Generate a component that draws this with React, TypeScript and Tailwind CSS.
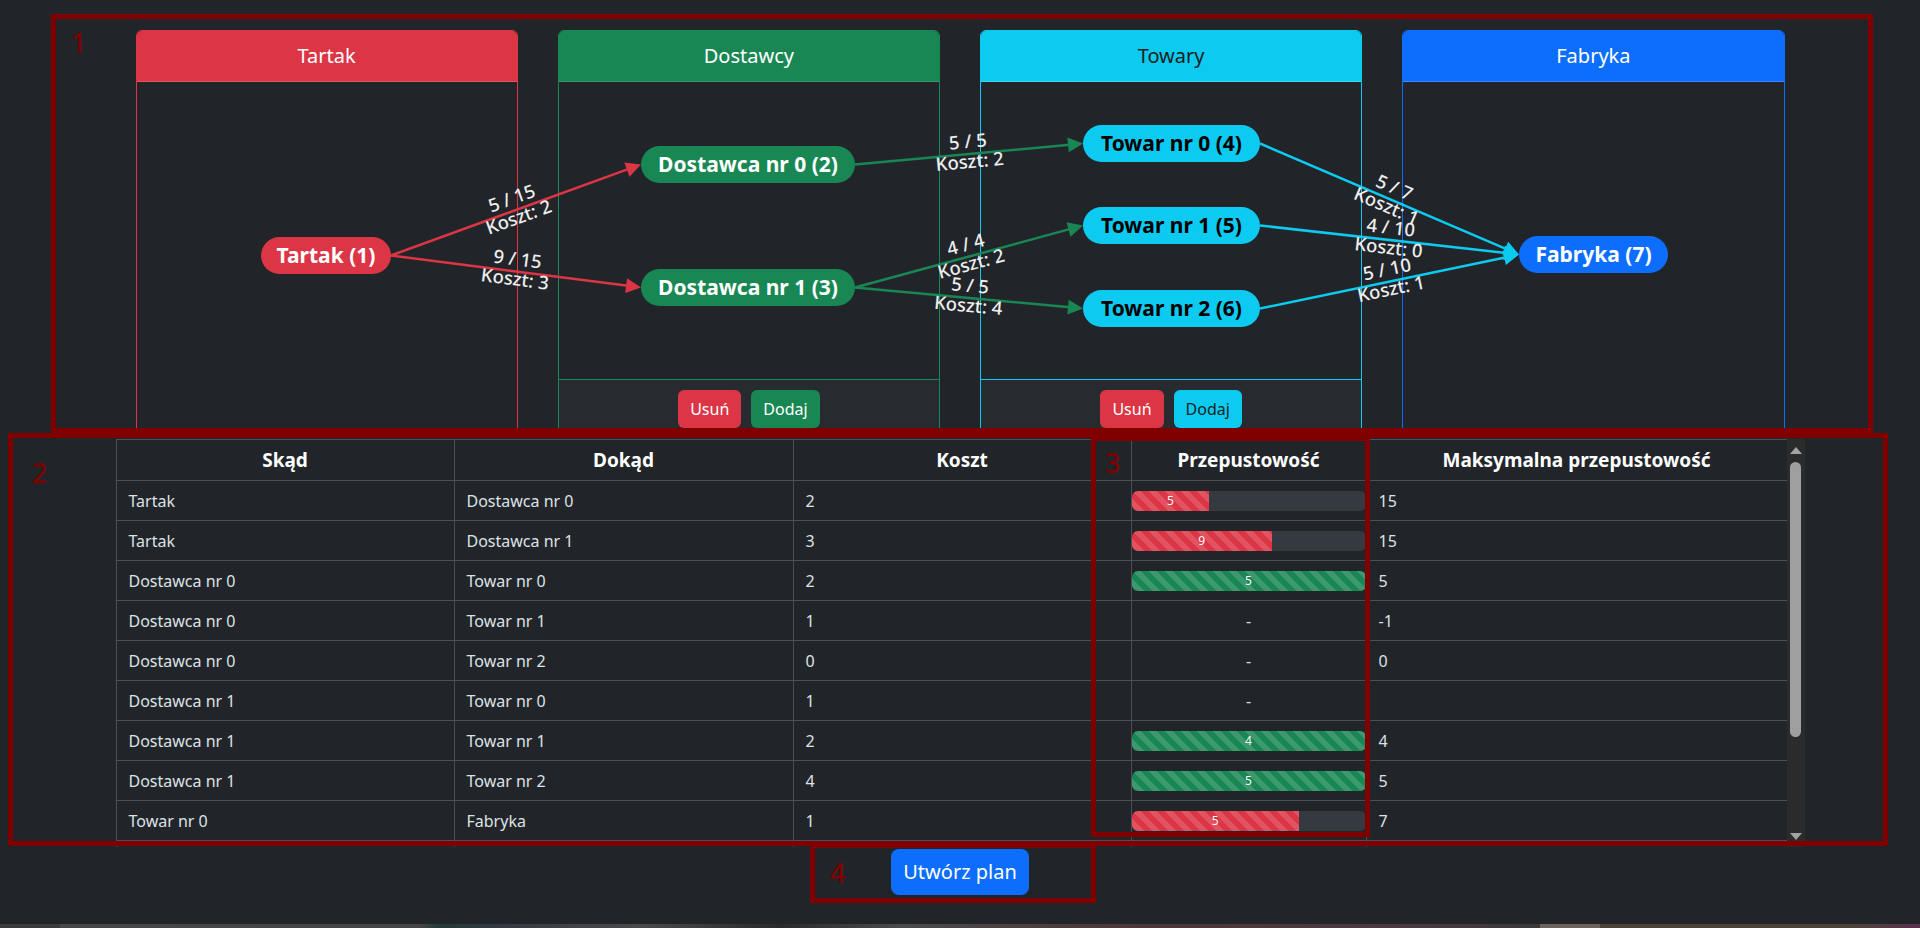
import React from "react";

const RED = "#dc3545";
const GREEN = "#198754";
const CYAN = "#0dcaf0";

type Edge = {
  x1: number;
  y1: number;
  x2: number;
  y2: number;
  color: string;
  flow: string;
  cost: number;
};

const edges: Edge[] = [
  { x1: 391, y1: 255.5, x2: 641, y2: 164.5, color: RED, flow: "5 / 15", cost: 2 },
  { x1: 391, y1: 255.5, x2: 641, y2: 287.5, color: RED, flow: "9 / 15", cost: 3 },
  { x1: 855, y1: 164.5, x2: 1083, y2: 143.5, color: GREEN, flow: "5 / 5", cost: 2 },
  { x1: 855, y1: 287.5, x2: 1083, y2: 225.5, color: GREEN, flow: "4 / 4", cost: 2 },
  { x1: 855, y1: 287.5, x2: 1083, y2: 308.5, color: GREEN, flow: "5 / 5", cost: 4 },
  { x1: 1260, y1: 143.5, x2: 1519, y2: 254.5, color: CYAN, flow: "5 / 7", cost: 1 },
  { x1: 1260, y1: 225.5, x2: 1519, y2: 254.5, color: CYAN, flow: "4 / 10", cost: 0 },
  { x1: 1260, y1: 308.5, x2: 1519, y2: 254.5, color: CYAN, flow: "5 / 10", cost: 1 },
];

const nodes = [
  { label: "Tartak (1)", cls: "left-[261px] top-[237px] w-[130px] bg-[#dc3545] text-white" },
  { label: "Dostawca nr 0 (2)", cls: "left-[641px] top-[146px] w-[214px] bg-[#198754] text-white" },
  { label: "Dostawca nr 1 (3)", cls: "left-[641px] top-[269px] w-[214px] bg-[#198754] text-white" },
  { label: "Towar nr 0 (4)", cls: "left-[1083px] top-[125px] w-[177px] bg-[#0dcaf0] text-black" },
  { label: "Towar nr 1 (5)", cls: "left-[1083px] top-[207px] w-[177px] bg-[#0dcaf0] text-black" },
  { label: "Towar nr 2 (6)", cls: "left-[1083px] top-[290px] w-[177px] bg-[#0dcaf0] text-black" },
  { label: "Fabryka (7)", cls: "left-[1519px] top-[236px] w-[149px] bg-[#0d6efd] text-white" },
];

type Row = [string, string, number, number | null, number | null];

const rows: Row[] = [
  ["Tartak", "Dostawca nr 0", 2, 5, 15],
  ["Tartak", "Dostawca nr 1", 3, 9, 15],
  ["Dostawca nr 0", "Towar nr 0", 2, 5, 5],
  ["Dostawca nr 0", "Towar nr 1", 1, null, -1],
  ["Dostawca nr 0", "Towar nr 2", 0, null, 0],
  ["Dostawca nr 1", "Towar nr 0", 1, null, null],
  ["Dostawca nr 1", "Towar nr 1", 2, 4, 4],
  ["Dostawca nr 1", "Towar nr 2", 4, 5, 5],
  ["Towar nr 0", "Fabryka", 1, 5, 7],
  ["Towar nr 1", "Fabryka", 0, 4, 10],
  ["Towar nr 2", "Fabryka", 1, 5, 10],
];

function Card({
  title,
  border,
  head,
  addBtn,
}: {
  title: string;
  border: string;
  head: string;
  addBtn?: string;
}) {
  return (
    <div className={`flex h-[404px] flex-col rounded-[6px] border ${border}`}>
      <div className={`flex h-[51px] items-center justify-center rounded-t-[5px] border-b text-[20px] ${head}`}>
        {title}
      </div>
      <div className="flex-1" />
      {addBtn && (
        <div className={`flex h-[54px] justify-center gap-[10px] rounded-b-[5px] border-t bg-[#272b30] pt-[10px] ${border}`}>
          <button className="h-[38px] rounded-[6px] bg-[#dc3545] px-3 text-[16px] text-white">Usuń</button>
          <button className={`h-[38px] rounded-[6px] px-3 text-[16px] ${addBtn}`}>Dodaj</button>
        </div>
      )}
    </div>
  );
}

function Graph() {
  return (
    <svg className="pointer-events-none absolute left-0 top-0 font-['Noto_Sans',sans-serif]" width={1920} height={434}>
      {edges.map((e, i) => {
        const dx = e.x2 - e.x1;
        const dy = e.y2 - e.y1;
        const len = Math.hypot(dx, dy);
        const ux = dx / len;
        const uy = dy / len;
        const bx = e.x2 - ux * 15;
        const by = e.y2 - uy * 15;
        const px = -uy * 7.5;
        const py = ux * 7.5;
        const mx = (e.x1 + e.x2) / 2;
        const my = (e.y1 + e.y2) / 2;
        const ang = (Math.atan2(dy, dx) * 180) / Math.PI;
        return (
          <g key={i}>
            <line x1={e.x1} y1={e.y1} x2={bx + ux * 2} y2={by + uy * 2} stroke={e.color} strokeWidth={2.5} />
            <polygon
              points={`${e.x2},${e.y2} ${bx + px},${by + py} ${bx - px},${by - py}`}
              fill={e.color}
            />
            <text
              transform={`rotate(${ang} ${mx} ${my})`}
              textAnchor="middle"
              fontSize={18.5}
              fontWeight={500}
              fill="#eeeeee"
            >
              <tspan x={mx} y={my - 6}>
                {e.flow}
              </tspan>
              <tspan x={mx} y={my + 14}>
                Koszt: {e.cost}
              </tspan>
            </text>
          </g>
        );
      })}
    </svg>
  );
}

function Bar({ value, max }: { value: number; max: number }) {
  const pct = Math.min(100, (value / max) * 100);
  const full = value >= max;
  return (
    <div className="flex h-5 w-full overflow-hidden rounded-[6px] bg-[#343a40]">
      <div
        className={`flex h-full items-center justify-center bg-[linear-gradient(45deg,rgba(255,255,255,.15)_25%,transparent_25%,transparent_50%,rgba(255,255,255,.15)_50%,rgba(255,255,255,.15)_75%,transparent_75%,transparent)] bg-[length:16px_16px] text-[12px] text-white ${
          full ? "bg-[#198754]" : "bg-[#dc3545]"
        }`}
        style={{ width: `${pct}%` }}
      >
        {value}
      </div>
    </div>
  );
}

function Mark({ n, box, label }: { n: string; box: string; label: string }) {
  return (
    <div className={`pointer-events-none absolute border-[5px] border-[#800000] ${box}`}>
      <span className={`absolute text-[27px] font-medium leading-none text-[#800000] ${label}`}>{n}</span>
    </div>
  );
}

export default function App() {
  return (
    <div className="relative flex h-[928px] flex-col overflow-hidden bg-[#212529] font-['Noto_Sans',sans-serif] text-[#dee2e6]">
      {/* graph */}
      <div className="relative">
        <div className="mx-auto grid w-[1649px] grid-cols-4 gap-x-[40px] pt-[30px]">
          <Card title="Tartak" border="border-[#dc3545]" head="border-[#e25563] bg-[#dc3545] text-white" />
          <Card
            title="Dostawcy"
            border="border-[#198754]"
            head="border-[#3a9a6c] bg-[#198754] text-white"
            addBtn="bg-[#198754] text-white"
          />
          <Card
            title="Towary"
            border="border-[#0dcaf0]"
            head="border-[#3dd5f3] bg-[#0dcaf0] text-[#1b1e21]"
            addBtn="bg-[#0dcaf0] text-[#1b1e21]"
          />
          <Card title="Fabryka" border="border-[#0d6efd]" head="border-[#3d8bfd] bg-[#0d6efd] text-white" />
        </div>
        <Graph />
        {nodes.map((n) => (
          <div
            key={n.label}
            className={`absolute flex h-[37px] items-center justify-center whitespace-nowrap rounded-full text-[21px] font-bold ${n.cls}`}
          >
            {n.label}
          </div>
        ))}
      </div>

      {/* table */}
      <div className="mx-auto mt-[5px] flex w-[1689px]">
        <div className="h-[408px] w-[1671px] overflow-y-auto [scrollbar-width:none]">
          <table className="w-full table-fixed border-collapse text-[16px]">
            <colgroup>
              <col className="w-[338px]" />
              <col className="w-[339px]" />
              <col className="w-[338px]" />
              <col className="w-[235px]" />
              <col className="w-[421px]" />
            </colgroup>
            <thead>
              <tr className="h-[41px]">
                {["Skąd", "Dokąd", "Koszt", "Przepustowość", "Maksymalna przepustowość"].map((h) => (
                  <th key={h} className="border border-[#495057] px-3 text-center text-[19px] font-bold text-white">
                    {h}
                  </th>
                ))}
              </tr>
            </thead>
            <tbody>
              {rows.map((r, i) => (
                <tr key={i} className="h-[40px]">
                  <td className="border border-[#495057] px-3">{r[0]}</td>
                  <td className="border border-[#495057] px-3">{r[1]}</td>
                  <td className="border border-[#495057] px-3">{r[2]}</td>
                  <td className="border border-[#495057] px-0 text-center">
                    {r[3] === null || r[4] === null || r[4] <= 0 ? "-" : <Bar value={r[3]} max={r[4]} />}
                  </td>
                  <td className="border border-[#495057] px-3">{r[4] === null ? "" : r[4]}</td>
                </tr>
              ))}
            </tbody>
          </table>
        </div>
        <div className="flex h-[408px] w-[18px] flex-col items-center bg-[#2b2b2b]">
          <div className="mt-[8px] h-0 w-0 border-x-[6px] border-b-[7px] border-x-transparent border-b-[#a3a3a3]" />
          <div className="mt-[8px] h-[275px] w-[11px] rounded-full bg-[#9f9f9f]" />
          <div className="mb-[7px] mt-auto h-0 w-0 border-x-[6px] border-t-[7px] border-x-transparent border-t-[#a3a3a3]" />
        </div>
      </div>

      <button className="mx-auto mt-[2px] h-[46px] w-[138px] rounded-[8px] bg-[#0d6efd] text-[20px] text-white">
        Utwórz plan
      </button>

      <div className="mt-auto h-[4px] w-full bg-[linear-gradient(90deg,#3b3b3b_0px,#3b3b3b_60px,#474747_60px,#454545_420px,#22393a_440px,#3a3a44_520px,#4a4a4a_640px,#2a2a2a_780px,#4a4a4a_900px,#4d3535_1150px,#4a3a40_1400px,#3a3838_1540px,#6b645c_1540px,#6b645c_1600px,#4a4436_1600px,#4a4436_1850px,#5a3050_1920px)]" />

      {/* annotation boxes */}
      <Mark n="1" box="left-[51px] top-[14px] h-[419px] w-[1822px]" label="left-[15px] top-[10px]" />
      <Mark n="2" box="left-[8px] top-[433px] h-[413px] w-[1880px]" label="left-[19px] top-[21px]" />
      <Mark n="3" box="left-[1091px] top-[436px] h-[401px] w-[279px]" label="left-[9px] top-[8px]" />
      <Mark n="4" box="left-[810px] top-[843px] h-[60px] w-[286px]" label="left-[15px] top-[11px]" />
    </div>
  );
}
